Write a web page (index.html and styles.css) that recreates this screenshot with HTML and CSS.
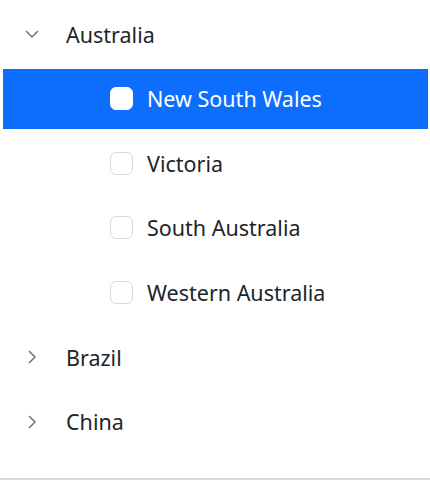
FILE: index.html
```html
<!DOCTYPE html>
<html lang="en">
<head>
    <meta charset="UTF-8">
    <meta name="viewport" content="width=device-width, initial-scale=1.0">
    <title>Tree</title>
    <link rel="stylesheet" href="styles.css">
</head>
<body>
    <div class="tree">
        <ul>
            <li class="node">
                <div class="row">
                    <span class="toggle">
                        <svg viewBox="0 0 16 16" width="16" height="16"><path d="M2 5l6 6 6-6" fill="none" stroke="currentColor" stroke-width="1.5"/></svg>
                    </span>
                    <span class="label">Australia</span>
                </div>
                <ul>
                    <li class="row child selected"><span class="check"></span><span class="label">New South Wales</span></li>
                    <li class="row child"><span class="check"></span><span class="label">Victoria</span></li>
                    <li class="row child"><span class="check"></span><span class="label">South Australia</span></li>
                    <li class="row child"><span class="check"></span><span class="label">Western Australia</span></li>
                </ul>
            </li>
            <li class="node">
                <div class="row">
                    <span class="toggle">
                        <svg viewBox="0 0 16 16" width="16" height="16"><path d="M5 2l6 6-6 6" fill="none" stroke="currentColor" stroke-width="1.5"/></svg>
                    </span>
                    <span class="label">Brazil</span>
                </div>
            </li>
            <li class="node">
                <div class="row">
                    <span class="toggle">
                        <svg viewBox="0 0 16 16" width="16" height="16"><path d="M5 2l6 6-6 6" fill="none" stroke="currentColor" stroke-width="1.5"/></svg>
                    </span>
                    <span class="label">China</span>
                </div>
            </li>
        </ul>
    </div>
</body>
</html>
```

FILE: styles.css
```css
* {
    margin: 0;
    padding: 0;
    box-sizing: border-box;
}

ul {
    list-style: none;
}

body {
    font-family: "Noto Sans", "Open Sans", sans-serif;
    color: #212529;
    background: #fff;
}

.tree {
    height: 480px;
    padding: 4px 2px 0 3px;
    border-bottom: 2px solid #d9d9d9;
    overflow: hidden;
}

.row {
    display: flex;
    align-items: center;
    height: 60px;
    margin-bottom: 4.67px;
    font-size: 21.5px;
}

.toggle {
    width: 58px;
    display: flex;
    justify-content: center;
    color: #6c757d;
    margin-right: 5px;
}

.toggle svg {
    display: block;
}

.child {
    padding-left: 107px;
}

.check {
    width: 23px;
    height: 23px;
    border: 1px solid #d6d9dc;
    border-radius: 6px;
    background: #fff;
    margin-right: 14px;
}

.selected {
    background: #0d6efd;
    color: #fff;
}

.selected .check {
    border-color: #fff;
}
```
